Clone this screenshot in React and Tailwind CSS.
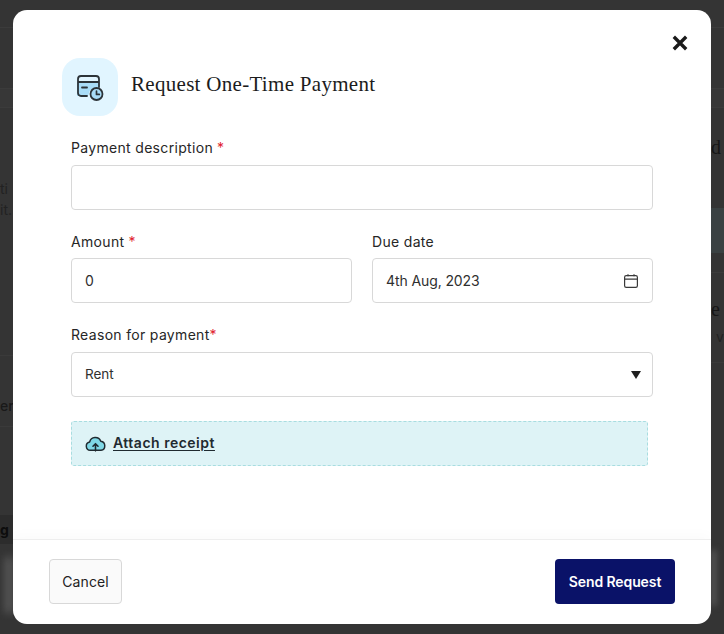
const inter = { fontFamily: "Inter, 'Noto Sans', sans-serif" };

function Label({ children, star, tight }) {
  return (
    <label className="block text-[14px] leading-[18px] tracking-[0.32px] font-normal text-[#262626]">
      {children}
      {star && <span className={tight ? "text-[#e11d2e]" : "ml-1 text-[#e11d2e]"}>*</span>}
    </label>
  );
}

function Box({ children, className = "" }) {
  return (
    <div className={"h-[45px] flex items-center justify-between px-[13px] bg-white border border-[#d8d8d8] rounded-[4px] text-[14px] text-[#2f2f2f] " + className}>
      {children}
    </div>
  );
}

function CardClock() {
  return (
    <svg width="28" height="28" viewBox="0 0 28 28" fill="none">
      <path d="M1 9h22v8h-9l-2 6H1z" fill="#a9dcf7" />
      <path d="M11 23H5a3 3 0 0 1-3-3V6a3 3 0 0 1 3-3h15a3 3 0 0 1 3 3v8" stroke="#2c3338" strokeWidth="1.8" strokeLinecap="round" />
      <path d="M2 9h21" stroke="#2c3338" strokeWidth="1.8" />
      <path d="M6 14.5h5" stroke="#2c3338" strokeWidth="1.8" strokeLinecap="round" />
      <circle cx="20.5" cy="21" r="6" fill="#a9dcf7" stroke="#2c3338" strokeWidth="1.8" />
      <path d="M20.5 18.2V21.4h2.8" stroke="#2c3338" strokeWidth="1.7" strokeLinecap="round" strokeLinejoin="round" />
    </svg>
  );
}

function CloudUp() {
  return (
    <svg width="21" height="17" viewBox="0 0 20 16" fill="none">
      <path d="M5 14.5a4 4 0 0 1-.6-7.9A5.6 5.6 0 0 1 15 5.8a4.4 4.4 0 0 1 .2 8.7z" fill="#7fd8e6" stroke="#1f2a30" strokeWidth="1.4" strokeLinejoin="round" />
      <path d="M10 15V8.5M7.6 10.6 10 8.2l2.4 2.4" stroke="#1f2a30" strokeWidth="1.5" strokeLinecap="round" strokeLinejoin="round" />
    </svg>
  );
}

function Calendar() {
  return (
    <svg width="16" height="16" viewBox="0 0 16 16" fill="none">
      <rect x="1.6" y="2.6" width="12.8" height="11.8" rx="1.6" stroke="#3a3a3a" strokeWidth="1.2" />
      <path d="M1.6 6.2h12.8M5 1.2v2M11 1.2v2" stroke="#3a3a3a" strokeWidth="1.2" />
    </svg>
  );
}

function Stripe({ h, className = "", children }) {
  return (
    <div className={"shrink-0 flex items-center whitespace-nowrap overflow-hidden " + className} style={{ height: h }}>
      {children}
    </div>
  );
}

function LeftEdge() {
  return (
    <div className="w-[13px] shrink-0 flex flex-col overflow-hidden" aria-hidden="true">
      <Stripe h={28} className="border-b border-[#3b3b3b]" />
      <Stripe h={61} className="border-b border-[#3b3b3b]" />
      <Stripe h={19} className="bg-[#373737] border-b border-[#3b3b3b]" />
      <Stripe h={72} />
      <Stripe h={16} className="text-[14px] text-[#222]">ti</Stripe>
      <Stripe h={5} />
      <Stripe h={16} className="text-[14px] text-[#222]">it.</Stripe>
      <Stripe h={139} className="border-b border-[#3a3a3a]" />
      <Stripe h={41} />
      <Stripe h={16} className="text-[14px] font-medium text-[#191919]">er</Stripe>
      <Stripe h={14} className="border-b border-[#3a3a3a]" />
      <Stripe h={88} />
      <Stripe h={29} className="bg-[#2c2c2c] text-[14px] font-bold text-[#0d0d0d]">g</Stripe>
      <Stripe h={6} />
      <Stripe h={70} className="pl-[5px]">
        <div className="w-[14px] h-[56px] bg-[#5c5c5c] blur-[4px]" />
      </Stripe>
    </div>
  );
}

function RightEdge() {
  return (
    <div className="w-[13px] shrink-0 flex flex-col overflow-hidden" aria-hidden="true">
      <Stripe h={28} className="border-b border-[#3b3b3b]" />
      <Stripe h={61} className="border-b border-[#3b3b3b]" />
      <Stripe h={19} className="bg-[#373737] border-b border-[#3b3b3b]" />
      <Stripe h={29} />
      <Stripe h={20} className="text-[20px] text-[#161616] font-['Liberation_Serif',serif]">d</Stripe>
      <Stripe h={51} />
      <Stripe h={45} className="bg-[#3a4142]" />
      <Stripe h={20} className="border-b border-[#3b3b3b]" />
      <Stripe h={26} />
      <Stripe h={20} className="text-[20px] text-[#161616] font-['Liberation_Serif',serif]">e</Stripe>
      <Stripe h={9} />
      <Stripe h={16} className="text-[14px] pl-[5px] text-[#222]">v</Stripe>
      <Stripe h={19} className="border-b border-[#3a3a3a]" />
      <Stripe h={180} />
      <Stripe h={70}>
        <div className="w-[5px] h-[56px] bg-[#5c5c5c] blur-[3px]" />
      </Stripe>
    </div>
  );
}

export default function App() {
  return (
    <div className="w-[724px] h-[634px] flex bg-[#343434] overflow-hidden" style={inter}>
      <LeftEdge />
      <div className="relative flex-1 my-[10px] flex flex-col bg-white rounded-[14px] overflow-hidden">
        <button className="absolute right-[22px] top-[24px] text-[#1a1a1a]" aria-label="Close">
          <svg width="18" height="18" viewBox="0 0 16 16" fill="none" className="block">
            <path d="M2.5 2.5l11 11M13.5 2.5l-11 11" stroke="currentColor" strokeWidth="3" />
          </svg>
        </button>

        <div className="flex-1 px-[58px] pt-[48px]">
          <div className="flex items-center gap-[13px] ml-[-9px]">
            <div className="w-[56px] h-[58px] rounded-[18px] bg-[#e1f5ff] flex items-center justify-center">
              <CardClock />
            </div>
            <h1 className="mb-[6px] text-[21px] leading-[24px] tracking-[0.3px] text-[#1c1c1c] font-['Liberation_Serif',serif]">
              Request One-Time Payment
            </h1>
          </div>

          <div className="flex flex-col gap-[23px] mt-[23px]">
            <div className="flex flex-col gap-[8px]">
              <Label star>Payment description</Label>
              <Box />
            </div>

            <div className="grid grid-cols-2 gap-[20px]">
              <div className="flex flex-col gap-[7px]">
                <Label star>Amount</Label>
                <Box>0</Box>
              </div>
              <div className="flex flex-col gap-[7px]">
                <Label>Due date</Label>
                <Box>
                  <span className="text-[14px] tracking-[-0.1px]">4th Aug, 2023</span>
                  <Calendar />
                </Box>
              </div>
            </div>

            <div className="flex flex-col gap-[8px]">
              <Label star tight>Reason for payment</Label>
              <Box>
                <span className="text-[13.5px]">Rent</span>
                <svg width="10" height="8" viewBox="0 0 10 8" className="mr-[-2px]">
                  <path d="M0 0h10L5 8z" fill="#1f1f1f" />
                </svg>
              </Box>
            </div>

            <div className="mt-[1px] w-[577px] h-[45px] flex items-center gap-[7px] pl-[13px] bg-[#def3f6] border border-dashed border-[#a8dde0] rounded-[3px]">
              <CloudUp />
              <span className="mb-[2px] text-[14px] tracking-[0.5px] font-semibold underline underline-offset-2 text-[#1f2a30]">Attach receipt</span>
            </div>
          </div>
        </div>

        <div className="h-[85px] flex items-start justify-between px-[36px] pt-[19px] border-t border-[#eeeeee] shadow-[0_-6px_10px_rgba(0,0,0,0.015)]">
          <button className="w-[73px] h-[45px] bg-[#fafafa] border border-[#d8d8d8] rounded-[4px] text-[14px] tracking-[0.1px] font-normal text-[#222]">
            <span className="block mb-[1px]">Cancel</span>
          </button>
          <button className="w-[120px] h-[45px] bg-[#0a1268] rounded-[4px] text-[14px] tracking-[-0.1px] font-semibold text-white">
            <span className="block mb-[1px]">Send Request</span>
          </button>
        </div>
      </div>
      <RightEdge />
    </div>
  );
}
